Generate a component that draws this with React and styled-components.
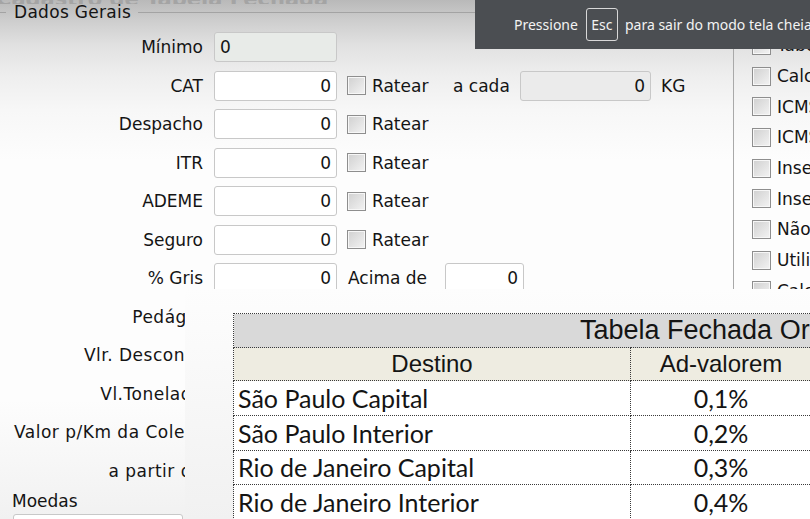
import React from 'react';
import styled, { createGlobalStyle } from 'styled-components';

const GlobalStyle = createGlobalStyle`
  html, body { margin: 0; padding: 0; background: #fff; }
  body { font-family: "DejaVu Sans", Verdana, sans-serif; }
`;

const Window = styled.div`
  position: relative;
  width: 810px;
  height: 519px;
  overflow: hidden;
  background: linear-gradient(#b9b9b9 0px, #cdcdcd 20px, #e1e1e1 45px, #eeeeee 75px, #f7f7f7 110px, #fdfdfd 160px, #fdfdfd 400px, #f1f1f1 519px);
  font-family: "DejaVu Sans", Verdana, sans-serif;
  font-size: 17px;
  color: #141414;
`;

const TitleStrip = styled.div`
  height: 4px;
  overflow: hidden;
  display: flex;
  align-items: flex-end;
  white-space: nowrap;
  span {
    font: bold 21px "DejaVu Sans", sans-serif;
    color: #a4a4a4;
    line-height: 1;
    margin-bottom: -6px;
    margin-left: -4px;
  }
`;

const Legend = styled.div`
  display: flex;
  align-items: center;
  height: 16px;
  &::before { content: ""; width: 6px; border-top: 1px solid #a3a3a3; }
  &::after { content: ""; flex: 1; border-top: 1px solid #a3a3a3; }
`;

const LegendText = styled.span`
  padding: 0 7px 0 8px;
  line-height: 16px;
  letter-spacing: 0.3px;
`;

const Body = styled.div`
  display: grid;
  grid-template-columns: 733px 1fr;
`;

const FormColumn = styled.div`
  padding-top: 8px;
`;

const Row = styled.div`
  display: flex;
  align-items: center;
  height: 38.5px;
`;

const Label = styled.label`
  width: 203px;
  flex-shrink: 0;
  text-align: right;
  white-space: nowrap;
  letter-spacing: ${p => p.$wide ? '0.5px' : '0'};
`;

const Field = styled.div`
  box-sizing: border-box;
  flex-shrink: 0;
  width: ${p => p.$w || 123}px;
  height: ${p => p.$h || 30}px;
  margin-left: ${p => (p.$ml ?? 11)}px;
  border: 1px solid #c8c8c8;
  border-radius: 3px;
  background: ${p => p.$bg || '#fff'};
  display: flex;
  align-items: center;
  justify-content: ${p => (p.$left ? 'flex-start' : 'flex-end')};
  padding: 0 5px;
`;

const Check = styled.span`
  box-sizing: border-box;
  flex-shrink: 0;
  width: 19px;
  height: 19px;
  margin-left: ${p => p.$ml || 0}px;
  border: 1px solid #8e8e8e;
  background: linear-gradient(135deg, #d0d0d0, #f3f3f3);
  box-shadow: inset 0 0 0 1px #f7f7f7;
`;

const CheckText = styled.span`
  margin-left: 6px;
  white-space: nowrap;
`;

const Inline = styled.div`
  display: flex;
  align-items: center;
  flex-shrink: 0;
  width: ${p => p.$w}px;
  margin-left: ${p => p.$ml || 0}px;
  white-space: nowrap;
`;

const Unit = styled.span`
  margin-left: 10px;
`;

const GroupLabel = styled.div`
  padding-left: 12px;
  line-height: 20px;
  margin-top: 1px;
`;

const SidePanel = styled.div`
  margin-top: 13px;
  height: 256px;
  border-left: 1px solid #a9a9a9;
  padding-left: 18px;
  overflow: hidden;
  white-space: nowrap;
`;

const SideList = styled.div`
  margin-top: -3px;
`;

const SideRow = styled.div`
  display: flex;
  align-items: center;
  height: 30.7px;
`;

const Clip = styled.div`
  position: absolute;
  left: 185px;
  top: 289px;
  right: 0;
  bottom: 0;
  background: linear-gradient(#fdfdfd, #f1f1f1);
  padding: 24px 0 0 48px;
  overflow: hidden;
`;

const Sheet = styled.table`
  border-collapse: collapse;
  table-layout: fixed;
  width: 578px;
  td, th { border: 1px dotted #3a3a3a; padding: 0; white-space: nowrap; }
`;

const TitleCell = styled.th`
  height: 33px;
  background: #d9d9d9;
  font: 400 27px "Liberation Sans", Arial, sans-serif;
  text-align: left;
  padding-left: 346px !important;
`;

const HeadCell = styled.th`
  height: 32px;
  background: #eeece1;
  font: 400 24px "Liberation Sans", Arial, sans-serif;
  text-align: center;
`;

const DataCell = styled.td`
  height: 33.75px;
  background: #fff;
  font: 400 25px Lato, "Open Sans", sans-serif;
  text-align: ${p => (p.$center ? 'center' : 'left')};
  padding: ${p => (p.$center ? '0' : '0 0 0 4px')} !important;
`;

const Toast = styled.div`
  position: absolute;
  top: 0;
  right: 0;
  width: 335px;
  height: 49px;
  box-sizing: border-box;
  background: #4b4e52;
  color: #f3f3f3;
  display: flex;
  align-items: center;
  padding-left: 39px;
  font: 14px "Noto Sans", "Open Sans", sans-serif;
  white-space: nowrap;
`;

const Key = styled.span`
  box-sizing: border-box;
  flex-shrink: 0;
  width: 32px;
  height: 33px;
  border: 1px solid #d8d8d8;
  border-radius: 3px;
  display: flex;
  align-items: center;
  justify-content: center;
  margin: 0 7px 0 8px;
`;

const lowerRows = ['Pedágio', 'Vlr. Desconto', 'Vl.Tonelada', 'Valor p/Km da Coleta', 'a partir de'];
const ratearRows = ['Despacho', 'ITR', 'ADEME', 'Seguro'];
const sideOptions = [
  'Tabela por Faixa', 'Calcular ICMS', 'ICMS Incluso', 'ICMS Destacado',
  'Inserir Pedágio', 'Inserir Seguro', 'Não Calcular', 'Utilizar Cubagem', 'Calcular TDE',
];
const destinos = [
  ['São Paulo Capital', '0,1%'],
  ['São Paulo Interior', '0,2%'],
  ['Rio de Janeiro Capital', '0,3%'],
  ['Rio de Janeiro Interior', '0,4%'],
];

export default function App() {
  return (
    <Window>
      <GlobalStyle />
      <TitleStrip><span>Cadastro de Tabela Fechada</span></TitleStrip>
      <Legend><LegendText>Dados Gerais</LegendText></Legend>
      <Body>
        <FormColumn>
          <Row>
            <Label>Mínimo</Label>
            <Field $bg="#e8ebe8" $left>0</Field>
          </Row>
          <Row>
            <Label>CAT</Label>
            <Field>0</Field>
            <Inline $w={106} $ml={10}><Check /><CheckText>Ratear</CheckText></Inline>
            <Inline $w={67}>a cada</Inline>
            <Field $w={131} $ml={0} $bg="#ebebeb">0</Field>
            <Unit>KG</Unit>
          </Row>
          {ratearRows.map(name => (
            <Row key={name}>
              <Label>{name}</Label>
              <Field>0</Field>
              <Check $ml={10} />
              <CheckText>Ratear</CheckText>
            </Row>
          ))}
          <Row>
            <Label>% Gris</Label>
            <Field>0</Field>
            <Inline $w={97} $ml={11}>Acima de</Inline>
            <Field $w={79} $ml={0}>0</Field>
          </Row>
          {lowerRows.map(name => (
            <Row key={name}>
              <Label $wide>{name}</Label>
              <Field />
            </Row>
          ))}
          <GroupLabel>Moedas</GroupLabel>
          <Field $w={170} $h={26} $ml={13} style={{ marginTop: 3 }} />
        </FormColumn>
        <SidePanel>
          <SideList>
            {sideOptions.map(opt => (
              <SideRow key={opt}>
                <Check />
                <CheckText>{opt}</CheckText>
              </SideRow>
            ))}
          </SideList>
        </SidePanel>
      </Body>

      <Clip>
        <Sheet>
          <colgroup>
            <col style={{ width: 397 }} />
            <col style={{ width: 181 }} />
          </colgroup>
          <thead>
            <tr><TitleCell colSpan={2}>Tabela Fechada Origem</TitleCell></tr>
            <tr><HeadCell>Destino</HeadCell><HeadCell>Ad-valorem</HeadCell></tr>
          </thead>
          <tbody>
            {destinos.map(([d, v]) => (
              <tr key={d}>
                <DataCell>{d}</DataCell>
                <DataCell $center>{v}</DataCell>
              </tr>
            ))}
          </tbody>
        </Sheet>
      </Clip>

      <Toast>
        Pressione<Key>Esc</Key>para sair do modo tela cheia
      </Toast>
    </Window>
  );
}
